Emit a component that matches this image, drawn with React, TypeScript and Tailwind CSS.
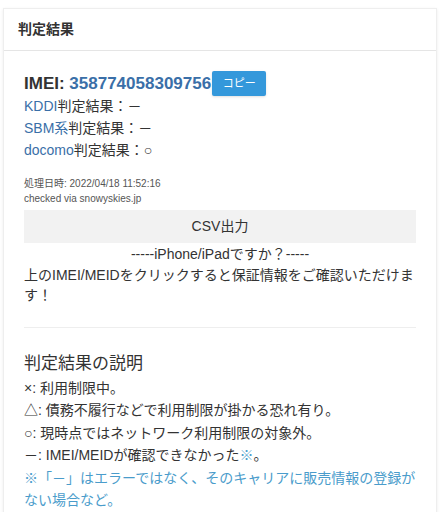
const link = "text-[#3a6fa8]";

const App = () => {
  return (
    <div
      className="bg-white min-h-[512px] pt-[8px] pl-[3px] pr-[11px] text-[#333]"
      style={{ fontFamily: '"Liberation Sans", "Noto Sans CJK JP", sans-serif' }}
    >
      <div className="border border-[#eee] shadow-[0_1px_3px_rgba(0,0,0,0.08)] bg-white">
        <div className="h-[42px] flex items-center px-[14px] border-b border-[#e5e5e5]">
          <h3 className="text-[14px] font-bold">判定結果</h3>
        </div>
        <div className="px-[20px] pt-[20px] pb-[16px]">
          <div className="flex items-center">
            <span className="text-[17px] font-bold leading-[24px]">
              IMEI: <span className={link}>358774058309756</span>
            </span>
            <button className="ml-[1px] bg-[#3498db] text-white text-[11px] h-[25px] w-[54px] rounded-[2px] shadow-sm">
              コピー
            </button>
          </div>
          <div className="text-[14px] leading-[22px] -mt-[1px]">
            <div>
              <span className={link}>KDDI</span>判定結果：－
            </div>
            <div>
              <span className={link}>SBM系</span>判定結果：－
            </div>
            <div>
              <span className={link}>docomo</span>判定結果：○
            </div>
          </div>
          <div className="mt-[15px] text-[10px] leading-[15px] text-[#555]">
            <div>処理日時: 2022/04/18 11:52:16</div>
            <div>checked via snowyskies.jp</div>
          </div>
          <button className="mt-[4px] w-full h-[33px] bg-[#f2f2f2] text-[14px] text-[#333]">
            CSV出力
          </button>
          <div className="text-center text-[14px] leading-[22px]">
            -----iPhone/iPadですか？-----
          </div>
          <p className="text-[14px] leading-[20px]">
            上のIMEI/MEIDをクリックすると保証情報をご確認いただけます！
          </p>
          <hr className="mt-[22px] border-t border-[#eee]" />
          <h4 className="mt-[24px] text-[17px] leading-[24px]">判定結果の説明</h4>
          <div className="text-[14px] leading-[22.4px] mt-[1px]">
            <div>×: 利用制限中。</div>
            <div>△: 債務不履行などで利用制限が掛かる恐れ有り。</div>
            <div>○: 現時点ではネットワーク利用制限の対象外。</div>
            <div>
              －: IMEI/MEIDが確認できなかった<span className="text-[#4a9ccb]">※</span>。
            </div>
            <div className="text-[#4a9ccb]">
              ※「－」はエラーではなく、そのキャリアに販売情報の登録がない場合など。
            </div>
          </div>
        </div>
      </div>
    </div>
  );
};

export default App;
